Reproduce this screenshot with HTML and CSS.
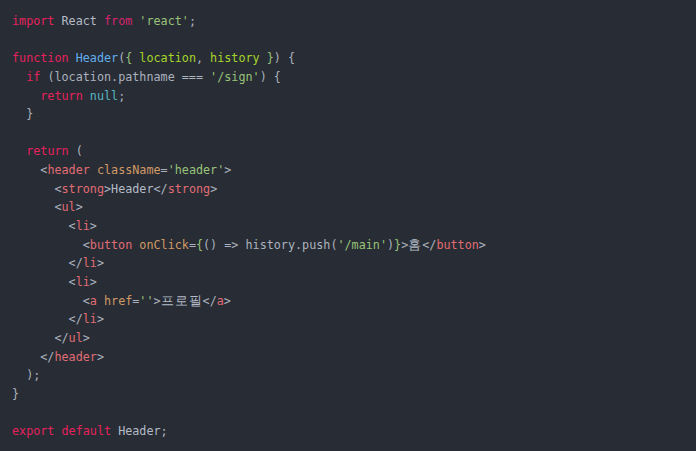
FILE: index.html
```html
<!DOCTYPE html>
<html lang="ko">
<head>
<meta charset="utf-8">
<title>Header.js</title>
<link rel="stylesheet" href="styles.css">
</head>
<body>
<pre class="code"><code><span class="kw">import</span> <span class="id">React</span> <span class="kw2">from</span> <span class="str">'react'</span><span class="pn">;</span>

<span class="kw">function</span> <span class="fn">Header</span><span class="pn">(</span><span class="br">{ </span><span class="prm">location</span><span class="pn">,</span> <span class="prm">history</span> <span class="br">}</span><span class="pn">) {</span>
  <span class="kw">if</span> <span class="pn">(location.pathname === </span><span class="str">'/sign'</span><span class="pn">) {</span>
    <span class="kw">return</span> <span class="lit">null</span><span class="pn">;</span>
  <span class="pn">}</span>

  <span class="kw">return</span> <span class="pn">(</span>
    <span class="pn">&lt;</span><span class="tag">header</span> <span class="attr">className</span><span class="pn">=</span><span class="str">'header'</span><span class="pn">&gt;</span>
      <span class="pn">&lt;</span><span class="tag">strong</span><span class="pn">&gt;</span><span class="id">Header</span><span class="pn">&lt;/</span><span class="tag">strong</span><span class="pn">&gt;</span>
      <span class="pn">&lt;</span><span class="tag">ul</span><span class="pn">&gt;</span>
        <span class="pn">&lt;</span><span class="tag">li</span><span class="pn">&gt;</span>
          <span class="pn">&lt;</span><span class="tag">button</span> <span class="attr">onClick</span><span class="pn">=</span><span class="br">{</span><span class="pn">() =&gt; history.push(</span><span class="str">'/main'</span><span class="pn">)</span><span class="br">}</span><span class="pn">&gt;</span><span class="id ko">홈</span><span class="pn">&lt;/</span><span class="tag">button</span><span class="pn">&gt;</span>
        <span class="pn">&lt;/</span><span class="tag">li</span><span class="pn">&gt;</span>
        <span class="pn">&lt;</span><span class="tag">li</span><span class="pn">&gt;</span>
          <span class="pn">&lt;</span><span class="tag">a</span> <span class="attr">href</span><span class="pn">=</span><span class="str">''</span><span class="pn">&gt;</span><span class="id ko">프로필</span><span class="pn">&lt;/</span><span class="tag">a</span><span class="pn">&gt;</span>
        <span class="pn">&lt;/</span><span class="tag">li</span><span class="pn">&gt;</span>
      <span class="pn">&lt;/</span><span class="tag">ul</span><span class="pn">&gt;</span>
    <span class="pn">&lt;/</span><span class="tag">header</span><span class="pn">&gt;</span>
  <span class="pn">);</span>
<span class="pn">}</span>

<span class="kw">export</span> <span class="kw">default</span> <span class="id">Header</span><span class="pn">;</span></code></pre>
</body>
</html>
```
FILE: styles.css
```css
html, body {
  margin: 0;
  padding: 0;
  background: #282c34;
  height: 100%;
}
.code {
  margin: 0;
  padding: 12px 12px;
  font-family: "DejaVu Sans Mono", "Noto Sans CJK KR", monospace;
  font-size: 11.75px;
  line-height: 18.64px;
  color: #abb2bf;
  background: #282c34;
}
.ko {
  font-size: 12.5px;
  letter-spacing: 1px;
}
.kw { color: #e5225e; }
.kw2 { color: #d6246f; }
.id { color: #b4bcc8; }
.str { color: #98c379; }
.pn { color: #abb2bf; }
.fn { color: #61afef; }
.br { color: #98c379; }
.prm { color: #a6d62a; }
.lit { color: #56b6c2; }
.tag { color: #e06c75; }
.attr { color: #d19a66; }
```
